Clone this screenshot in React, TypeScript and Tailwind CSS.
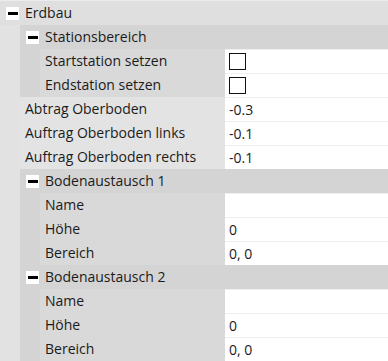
import React from "react";

const Minus = () => (
  <span className="flex h-[13px] w-[13px] shrink-0 items-center justify-center bg-white">
    <span className="h-[3px] w-[10px] bg-black" />
  </span>
);

const ValueCell = ({ children }: { children?: React.ReactNode }) => (
  <div className="flex h-6 w-[163px] shrink-0 items-center border-t border-[#efefef] bg-white pl-[4px]">
    {children}
  </div>
);

const Checkbox = () => <span className="block h-[17px] w-[17px] border border-[#111]" />;

const Prop = ({ label, bg, value }: { label: string; bg: string; value?: React.ReactNode }) => (
  <div className="flex h-6">
    <div className={`flex flex-1 items-center pl-[5px] ${bg}`}>{label}</div>
    <ValueCell>{value}</ValueCell>
  </div>
);

const GroupHeader = ({ label }: { label: string }) => (
  <div className="flex h-6 items-center bg-[#d4d4d4] pl-[6px]">
    <Minus />
    <span className="pl-[6px]">{label}</span>
  </div>
);

const Group = ({ label, children }: { label: string; children: React.ReactNode }) => (
  <div className="flex flex-col">
    <GroupHeader label={label} />
    <div className="flex">
      <div className="w-5 shrink-0 bg-[#d4d4d4]" />
      <div className="flex flex-1 flex-col">{children}</div>
    </div>
  </div>
);

export default function App() {
  return (
    <div
      className="h-[361px] w-[388px] overflow-hidden border-t border-[#ececec] bg-white text-[14px] leading-none text-[#1b1b1b]"
      style={{ fontFamily: '"Open Sans", "Noto Sans", sans-serif' }}
    >
      <div className="flex h-6 items-center bg-[#dfdfdf] pl-[6px]">
        <Minus />
        <span className="pl-[6px]">Erdbau</span>
      </div>
      <div className="flex">
        <div className="w-5 shrink-0 bg-[#e2e2e2]" />
        <div className="flex flex-1 flex-col">
          <Group label="Stationsbereich">
            <Prop label="Startstation setzen" bg="bg-[#d9d9d9]" value={<Checkbox />} />
            <Prop label="Endstation setzen" bg="bg-[#d9d9d9]" value={<Checkbox />} />
          </Group>
          <Prop label="Abtrag Oberboden" bg="bg-[#e3e3e3]" value="-0.3" />
          <Prop label="Auftrag Oberboden links" bg="bg-[#e3e3e3]" value="-0.1" />
          <Prop label="Auftrag Oberboden rechts" bg="bg-[#e3e3e3]" value="-0.1" />
          <Group label="Bodenaustausch 1">
            <Prop label="Name" bg="bg-[#d9d9d9]" value="" />
            <Prop label="Höhe" bg="bg-[#d9d9d9]" value="0" />
            <Prop label="Bereich" bg="bg-[#d9d9d9]" value="0, 0" />
          </Group>
          <Group label="Bodenaustausch 2">
            <Prop label="Name" bg="bg-[#d9d9d9]" value="" />
            <Prop label="Höhe" bg="bg-[#d9d9d9]" value="0" />
            <Prop label="Bereich" bg="bg-[#d9d9d9]" value="0, 0" />
          </Group>
        </div>
      </div>
    </div>
  );
}
